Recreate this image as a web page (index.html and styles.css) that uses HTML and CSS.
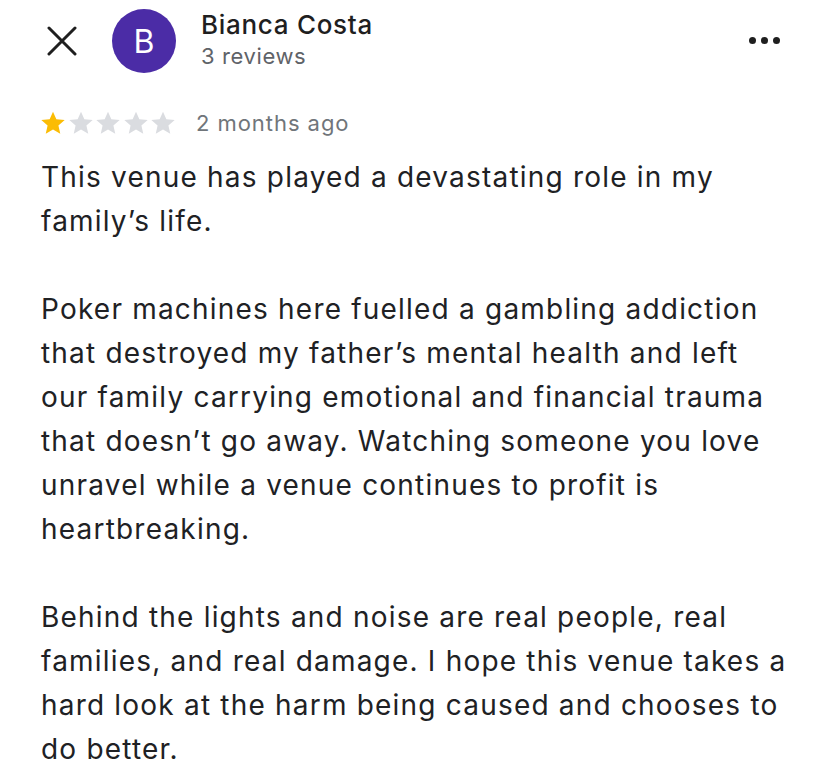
FILE: index.html
```html
<!DOCTYPE html>
<html>
<head>
<meta charset="utf-8">
<link rel="stylesheet" href="styles.css">
</head>
<body>
<div class="page">
  <header class="header">
    <button class="close" aria-label="Close">
      <svg width="30" height="30" viewBox="0 0 30 30"><path d="M2 2 L28 28 M28 2 L2 28" stroke="#1f1f1f" stroke-width="3" stroke-linecap="round" fill="none"/></svg>
    </button>
    <div class="avatar">B</div>
    <div class="who">
      <div class="name">Bianca Costa</div>
      <div class="count">3 reviews</div>
    </div>
    <div class="more" aria-label="More">
      <span></span><span></span><span></span>
    </div>
  </header>
  <div class="meta">
    <div class="stars">
      <svg class="star on" viewBox="0 0 24 24"><path d="M12 1.5l3.1 7.1 7.7.7-5.8 5.1 1.7 7.6L12 18l-6.7 4 1.7-7.6L1.2 9.3l7.7-.7z"/></svg>
      <svg class="star" viewBox="0 0 24 24"><path d="M12 1.5l3.1 7.1 7.7.7-5.8 5.1 1.7 7.6L12 18l-6.7 4 1.7-7.6L1.2 9.3l7.7-.7z"/></svg>
      <svg class="star" viewBox="0 0 24 24"><path d="M12 1.5l3.1 7.1 7.7.7-5.8 5.1 1.7 7.6L12 18l-6.7 4 1.7-7.6L1.2 9.3l7.7-.7z"/></svg>
      <svg class="star" viewBox="0 0 24 24"><path d="M12 1.5l3.1 7.1 7.7.7-5.8 5.1 1.7 7.6L12 18l-6.7 4 1.7-7.6L1.2 9.3l7.7-.7z"/></svg>
      <svg class="star" viewBox="0 0 24 24"><path d="M12 1.5l3.1 7.1 7.7.7-5.8 5.1 1.7 7.6L12 18l-6.7 4 1.7-7.6L1.2 9.3l7.7-.7z"/></svg>
    </div>
    <span class="ago">2 months ago</span>
  </div>
  <div class="review">
    <p>This venue has played a devastating role in my family’s life.</p>
    <p>Poker machines here fuelled a gambling addiction that destroyed my father’s mental health and left our family carrying emotional and financial trauma that doesn’t go away. Watching someone you love unravel while a venue continues to profit is heartbreaking.</p>
    <p>Behind the lights and noise are real people, real families, and real damage. I hope this venue takes a hard look at the harm being caused and chooses to do better.</p>
  </div>
</div>
</body>
</html>
```
FILE: styles.css
```css
html, body {
  margin: 0;
  padding: 0;
  background: #ffffff;
}
body {
  font-family: Inter, "Noto Sans", "Liberation Sans", sans-serif;
  color: #202124;
}
.page {
  padding: 9px 34px 0 41px;
}
.header {
  display: flex;
  align-items: center;
  height: 64px;
  padding-right: 14px;
}
.close {
  border: 0;
  background: none;
  padding: 0;
  margin: 0 0 0 6px;
  width: 30px;
  height: 30px;
  display: flex;
}
.avatar {
  width: 64px;
  height: 64px;
  border-radius: 50%;
  background: #4b2ca6;
  color: #ffffff;
  font-size: 32px;
  display: flex;
  align-items: center;
  justify-content: center;
  margin-left: 35px;
}
.who {
  margin-left: 25px;
  flex: 1;
  margin-top: -2px;
}
.name {
  font-size: 26px;
  font-weight: 500;
  letter-spacing: 0.7px;
  line-height: 32px;
  color: #1f1f1f;
}
.count {
  font-size: 22px;
  letter-spacing: 0.6px;
  line-height: 30px;
  color: #5f6368;
}
.more {
  display: flex;
  gap: 5px;
  align-self: flex-start;
  margin-top: 28px;
}
.more span {
  width: 7px;
  height: 7px;
  border-radius: 50%;
  background: #1f1f1f;
}
.meta {
  display: flex;
  align-items: center;
  margin-top: 36px;
  height: 28px;
}
.stars {
  display: flex;
  gap: 1.5px;
  margin-left: -1px;
}
.star {
  width: 26px;
  height: 26px;
  fill: #dadce0;
}
.star.on {
  fill: #fbbc04;
}
.ago {
  margin-left: 20px;
  font-size: 22px;
  letter-spacing: 0.95px;
  color: #70757a;
}
.review {
  margin-top: 18px;
  font-size: 28px;
  letter-spacing: 1.2px;
  line-height: 44px;
  color: #202124;
}
.review p {
  margin: 0 0 44px 0;
}
.review p:last-child {
  margin-bottom: 0;
}
```
